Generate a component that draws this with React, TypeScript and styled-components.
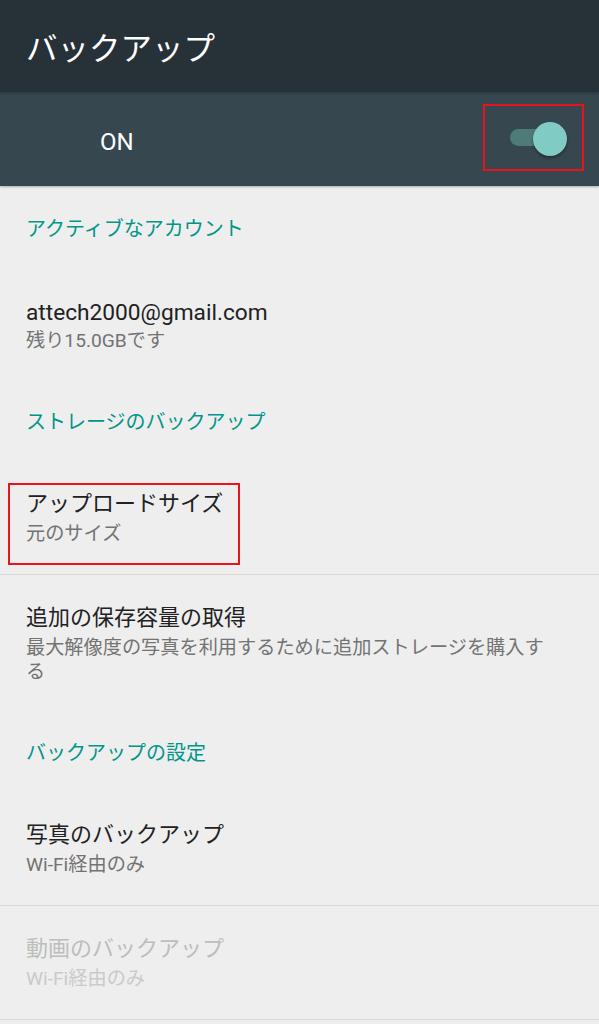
import React from "react";
import styled, { createGlobalStyle } from "styled-components";

const GlobalStyle = createGlobalStyle`
  html, body {
    margin: 0;
    padding: 0;
    background: #eeeeee;
  }
  body {
    font-family: "Roboto", "Noto Sans CJK JP", "Noto Sans", sans-serif;
    -webkit-font-smoothing: antialiased;
  }
  * { box-sizing: border-box; }
`;

const Screen = styled.div`
  width: 599px;
  min-height: 1024px;
  background: #eeeeee;
  overflow: hidden;
`;

const AppBar = styled.header`
  height: 92px;
  background: #263238;
  display: flex;
  align-items: center;
  padding-left: 26px;
  position: relative;
  z-index: 2;
  box-shadow: 0 1px 3px rgba(0, 0, 0, 0.25);
`;

const Title = styled.h1`
  margin: 0;
  font-family: "Noto Sans CJK JP", sans-serif;
  font-weight: 400;
  font-size: 31.5px;
  line-height: 40px;
  color: #ffffff;
`;

const SwitchBar = styled.div`
  height: 94px;
  background: #37474f;
  display: flex;
  align-items: center;
  justify-content: space-between;
  padding: 0 32px 0 100px;
  position: relative;
  z-index: 1;
  box-shadow: 0 1px 2px rgba(0, 0, 0, 0.28);
`;

const SwitchLabel = styled.span`
  font-family: "Roboto", sans-serif;
  font-size: 24px;
  color: #ffffff;
  line-height: 30px;
  margin-top: 5px;
`;

const Toggle = styled.div`
  position: relative;
  width: 57px;
  height: 34px;
`;

const Track = styled.div`
  position: absolute;
  left: 0;
  top: 7px;
  width: 50px;
  height: 17px;
  border-radius: 9px;
  background: #4e7a78;
`;

const Thumb = styled.div`
  position: absolute;
  right: 0;
  top: 0;
  width: 34px;
  height: 34px;
  border-radius: 50%;
  background: #80cbc4;
  box-shadow: 0 2px 3px rgba(0, 0, 0, 0.35);
`;

const Highlight = styled.div<{ $l: number; $t: number; $w: number; $h: number }>`
  position: absolute;
  left: ${(p) => p.$l}px;
  top: ${(p) => p.$t}px;
  width: ${(p) => p.$w}px;
  height: ${(p) => p.$h}px;
  border: 2px solid #e8141c;
  pointer-events: none;
`;

const List = styled.main`
  padding-top: 2px;
`;

const Category = styled.div`
  height: 80px;
  display: flex;
  align-items: center;
  padding-left: 26px;
  font-family: "Noto Sans CJK JP", sans-serif;
  font-size: 20px;
  line-height: 24px;
  color: #009688;
`;

const Item = styled.div<{ $divider?: boolean }>`
  position: relative;
  padding: 28px 52px 28px 26px;
  border-bottom: ${(p) => (p.$divider ? "1px solid #d8d8d8" : "none")};
`;

const Primary = styled.div<{ $disabled?: boolean }>`
  font-size: 22px;
  line-height: 30px;
  color: ${(p) => (p.$disabled ? "#bdbdbd" : "#212121")};
`;

const AccountName = styled(Primary)`
  font-size: 22.7px;
  padding-top: 2px;
  margin-bottom: -2px;
`;

const Secondary = styled.div<{ $disabled?: boolean }>`
  margin-top: 3px;
  font-size: 19.2px;
  line-height: 24px;
  color: ${(p) => (p.$disabled ? "#cacaca" : "#737373")};
`;

export default function App() {
  return (
    <>
      <GlobalStyle />
      <Screen>
        <AppBar>
          <Title>バックアップ</Title>
        </AppBar>
        <SwitchBar>
          <SwitchLabel>ON</SwitchLabel>
          <Toggle>
            <Track />
            <Thumb />
            <Highlight $l={-27} $t={-18} $w={101} $h={67} />
          </Toggle>
        </SwitchBar>
        <List>
          <Category>アクティブなアカウント</Category>
          <Item>
            <AccountName>attech2000@gmail.com</AccountName>
            <Secondary>残り15.0GBです</Secondary>
          </Item>
          <Category>ストレージのバックアップ</Category>
          <Item $divider>
            <Primary>アップロードサイズ</Primary>
            <Secondary>元のサイズ</Secondary>
            <Highlight $l={8} $t={22} $w={232} $h={82} />
          </Item>
          <Item>
            <Primary>追加の保存容量の取得</Primary>
            <Secondary>最大解像度の写真を利用するために追加ストレージを購入する</Secondary>
          </Item>
          <Category>バックアップの設定</Category>
          <Item $divider>
            <Primary>写真のバックアップ</Primary>
            <Secondary>Wi-Fi経由のみ</Secondary>
          </Item>
          <Item $divider>
            <Primary $disabled>動画のバックアップ</Primary>
            <Secondary $disabled>Wi-Fi経由のみ</Secondary>
          </Item>
        </List>
      </Screen>
    </>
  );
}
